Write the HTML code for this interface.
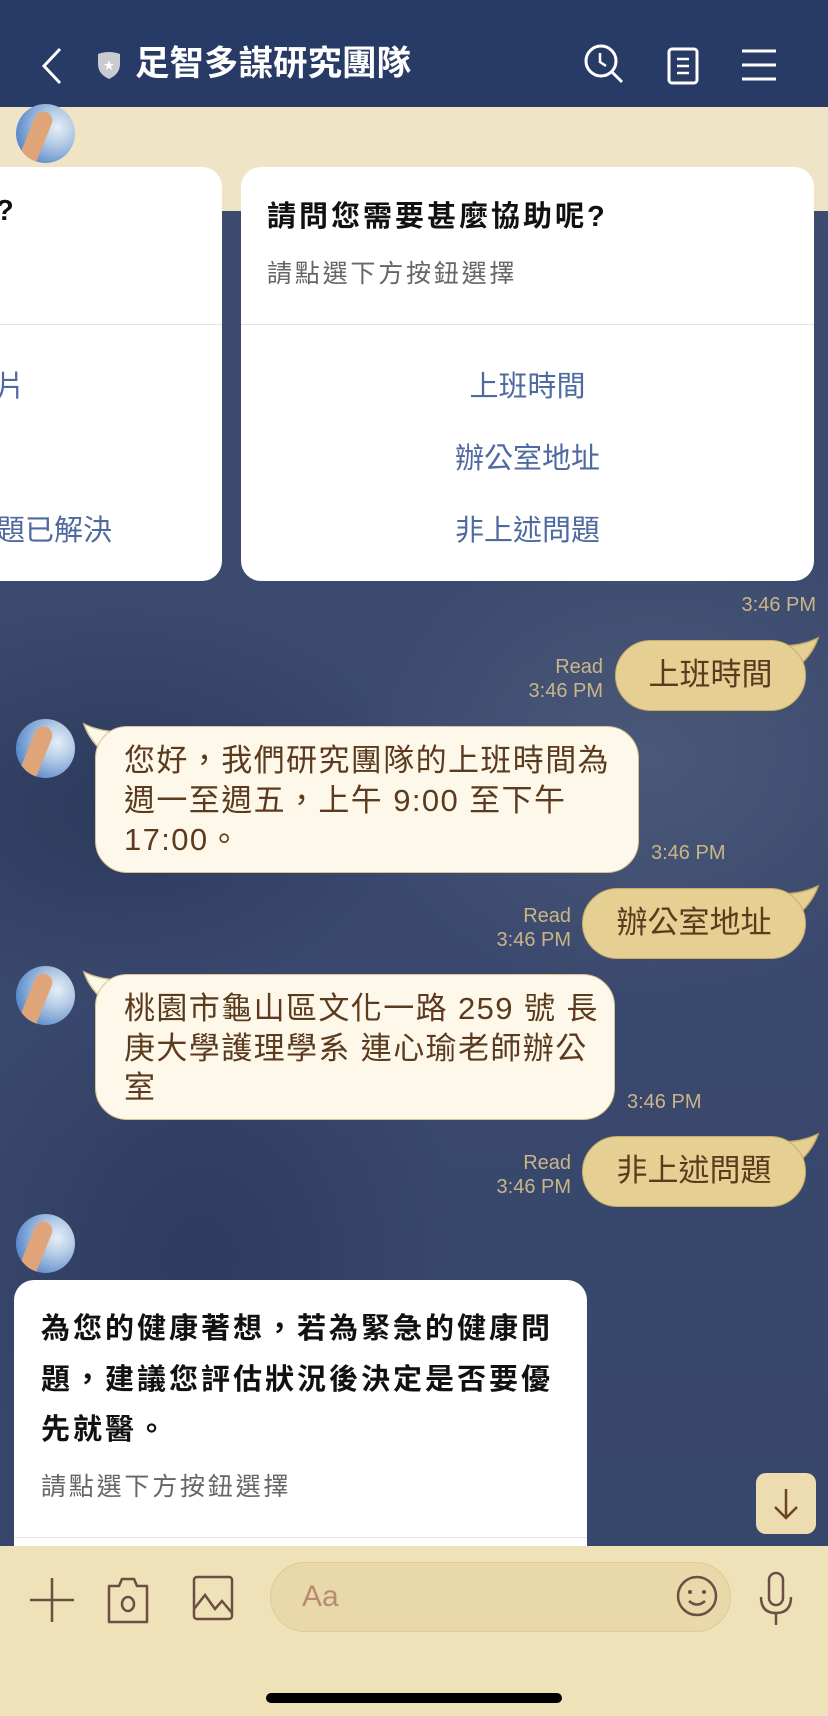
<!DOCTYPE html>
<html><head><meta charset="utf-8"><style>
*{margin:0;padding:0;box-sizing:border-box}
body{width:828px;height:1716px;overflow:hidden;position:relative;font-family:"Liberation Sans","Noto Sans CJK TC",sans-serif;background:#3c4a6f}
.bg{position:absolute;left:0;top:107px;width:828px;height:1440px;background:radial-gradient(ellipse 300px 200px at 120px 700px,#2c3a5c,transparent),radial-gradient(ellipse 260px 300px at 200px 1150px,#2e3b5e,transparent),radial-gradient(ellipse 300px 250px at 650px 650px,#4a5878,transparent),linear-gradient(#3d4b70,#37466b)}
.hdr{position:absolute;left:0;top:0;width:828px;height:107px;background:#283a66}
.band{position:absolute;left:0;top:107px;width:828px;height:104px;background:#f0e4c6}
.ab{position:absolute}
.av{position:absolute;left:16px;width:59px;height:59px;border-radius:50%;background:radial-gradient(circle at 70% 40%,#e6eef8 0,#b7cde6 30%,#5d8ccc 75%);overflow:hidden}
.av:after{content:"";position:absolute;left:10px;top:6px;width:18px;height:62px;background:#e0a479;border-radius:9px;transform:rotate(22deg)}
.card{position:absolute;background:#fff;border-radius:20px;overflow:hidden}
.t{position:absolute;white-space:nowrap}
.sent{position:absolute;background:#e5cf93;border:1.5px solid #c9ad63;border-radius:36px;color:#5c3a1e;font-size:31px;text-align:center;line-height:68px;white-space:nowrap}
.rec{position:absolute;background:#fdf8ea;border:1.5px solid #d8c490;border-radius:32px;color:#5c3a1e;font-size:31px;line-height:39.5px;padding:14px 28px;white-space:nowrap;letter-spacing:1.4px}
.tm{position:absolute;color:#c9b688;font-size:20px;text-align:right;line-height:24px;white-space:nowrap}
.btn{position:absolute;left:0;width:100%;text-align:center;color:#4f6aa0;font-size:29px}
.sub{font-size:25px;color:#666;letter-spacing:2.8px}
.ttl{font-size:29px;font-weight:bold;color:#111;letter-spacing:3px}
</style></head><body>
<div class="bg"></div>
<div class="band"></div>
<div class="hdr">
<svg class="ab" style="left:38px;top:46px" width="26" height="40"><path d="M22 3 L6 20 L22 37" stroke="#fff" stroke-width="3" fill="none"/></svg>
<svg class="ab" style="left:96px;top:50px" width="26" height="30"><path d="M2 4 Q13 0 24 4 L24 14 Q24 24 13 29 Q2 24 2 14Z" fill="#c9cbd0"/><text x="13" y="19" font-size="11" fill="#fff" text-anchor="middle">★</text></svg>
<div class="t" style="left:135px;top:44px;font-size:34.5px;font-weight:bold;color:#fff;line-height:40px">足智多謀研究團隊</div>
<svg class="ab" style="left:584px;top:44px" width="42" height="42"><circle cx="17" cy="17" r="15" stroke="#fff" stroke-width="3" fill="none"/><path d="M16 9 V18 L22 22" stroke="#fff" stroke-width="2.5" fill="none"/><path d="M28 28 L38 38" stroke="#fff" stroke-width="3"/></svg>
<svg class="ab" style="left:667px;top:47px" width="32" height="38"><rect x="2" y="2" width="28" height="34" rx="3" stroke="#fff" stroke-width="3" fill="none"/><path d="M10 12 H22 M10 19 H22 M10 26 H22" stroke="#fff" stroke-width="2.5"/></svg>
<svg class="ab" style="left:742px;top:48px" width="34" height="34"><path d="M0 3 H34 M0 17 H34 M0 31 H34" stroke="#fff" stroke-width="3"/></svg>
</div>
<div class="av" style="top:104px"></div>
<div class="card" style="left:-300px;top:167px;width:522px;height:414px">
<div class="t ttl" style="left:296px;top:28px">?</div>
<div style="position:absolute;left:0;top:157px;width:100%;border-top:1px solid #e2e2e2"></div>
<div class="t" style="left:296px;top:196px;font-size:29px;color:#4f6aa0">片</div>
<div class="t" style="left:296px;top:340px;font-size:29px;color:#4f6aa0">題已解決</div>
</div>
<div class="card" style="left:241px;top:167px;width:573px;height:414px">
<div class="t ttl" style="left:26px;top:26px">請問您需要甚麼協助呢?</div>
<div class="t sub" style="left:26px;top:87px">請點選下方按鈕選擇</div>
<div style="position:absolute;left:0;top:157px;width:100%;border-top:1px solid #e2e2e2"></div>
<div class="btn" style="top:196px">上班時間</div>
<div class="btn" style="top:268px">辦公室地址</div>
<div class="btn" style="top:340px">非上述問題</div>
</div>
<div class="tm" style="left:700px;top:593px;width:116px">3:46 PM</div>

<svg class="ab" style="left:780px;top:636px" width="40" height="36"><path d="M0 10 Q22 10 38 2 Q32 20 14 34 L0 34Z" fill="#e5cf93" stroke="#c9ad63" stroke-width="1.5"/></svg>
<div class="sent" style="left:615px;top:640px;width:191px;height:71px">上班時間</div>
<div class="tm" style="left:470px;top:655px;width:133px">Read<br>3:46 PM</div>

<div class="av" style="top:719px"></div>
<svg class="ab" style="left:82px;top:722px" width="40" height="36"><path d="M40 10 Q18 10 2 2 Q8 20 26 34 L40 34Z" fill="#fdf8ea" stroke="#d8c490" stroke-width="1.5"/></svg>
<div class="rec" style="left:95px;top:726px;width:544px;height:147px">您好，我們研究團隊的上班時間為<br>週一至週五，上午 9:00 至下午<br>17:00。</div>
<div class="tm" style="left:651px;top:841px">3:46 PM</div>

<svg class="ab" style="left:780px;top:884px" width="40" height="36"><path d="M0 10 Q22 10 38 2 Q32 20 14 34 L0 34Z" fill="#e5cf93" stroke="#c9ad63" stroke-width="1.5"/></svg>
<div class="sent" style="left:582px;top:888px;width:224px;height:71px">辦公室地址</div>
<div class="tm" style="left:430px;top:904px;width:141px">Read<br>3:46 PM</div>

<div class="av" style="top:966px"></div>
<svg class="ab" style="left:82px;top:970px" width="40" height="36"><path d="M40 10 Q18 10 2 2 Q8 20 26 34 L40 34Z" fill="#fdf8ea" stroke="#d8c490" stroke-width="1.5"/></svg>
<div class="rec" style="left:95px;top:974px;width:520px;height:146px">桃園市龜山區文化一路 259 號 長<br>庚大學護理學系 連心瑜老師辦公<br>室</div>
<div class="tm" style="left:627px;top:1090px">3:46 PM</div>

<svg class="ab" style="left:780px;top:1132px" width="40" height="36"><path d="M0 10 Q22 10 38 2 Q32 20 14 34 L0 34Z" fill="#e5cf93" stroke="#c9ad63" stroke-width="1.5"/></svg>
<div class="sent" style="left:582px;top:1136px;width:224px;height:71px">非上述問題</div>
<div class="tm" style="left:430px;top:1151px;width:141px">Read<br>3:46 PM</div>

<div class="av" style="top:1214px"></div>
<div class="card" style="left:14px;top:1280px;width:573px;height:300px">
<div class="t ttl" style="left:27px;top:24px;line-height:50.5px">為您的健康著想，若為緊急的健康問<br>題，建議您評估狀況後決定是否要優<br>先就醫。</div>
<div class="t sub" style="left:27px;top:187px">請點選下方按鈕選擇</div>
<div style="position:absolute;left:0;top:257px;width:100%;border-top:1px solid #e2e2e2"></div>
</div>
<div class="ab" style="left:756px;top:1473px;width:60px;height:61px;background:#ecdcb0;border-radius:10px"><svg width="60" height="61"><path d="M30 16 V44 M19 34 L30 45 L41 34" stroke="#6b4426" stroke-width="2.5" fill="none"/></svg></div>

<div class="ab" style="left:0;top:1546px;width:828px;height:170px;background:#efe1b8"></div>
<svg class="ab" style="left:28px;top:1576px" width="48" height="48"><path d="M24 2 V46 M2 24 H46" stroke="#6b4f42" stroke-width="2.5"/></svg>
<svg class="ab" style="left:106px;top:1574px" width="44" height="50"><path d="M3 12 H13 L16 5 H28 L31 12 H41 V48 H3Z" stroke="#6b4f42" stroke-width="2.5" fill="none" stroke-linejoin="round"/><ellipse cx="22" cy="30" rx="6" ry="7" stroke="#6b4f42" stroke-width="2.5" fill="none"/></svg>
<svg class="ab" style="left:192px;top:1575px" width="44" height="48"><rect x="2" y="2" width="38" height="42" rx="3" stroke="#6b4f42" stroke-width="2.5" fill="none"/><path d="M2 34 L13 20 L23 34 L30 26 L40 38" stroke="#6b4f42" stroke-width="2.5" fill="none"/></svg>
<div class="ab" style="left:270px;top:1562px;width:461px;height:70px;border-radius:35px;background:#e9d8a9;border:1px solid #e0cb94"></div>
<div class="t" style="left:302px;top:1580px;font-size:30px;color:#b68d72">Aa</div>
<svg class="ab" style="left:675px;top:1574px" width="44" height="44"><circle cx="22" cy="22" r="19" stroke="#6b4f42" stroke-width="2.5" fill="none"/><circle cx="15" cy="18" r="2" fill="#6b4f42"/><circle cx="29" cy="18" r="2" fill="#6b4f42"/><path d="M14 27 Q22 34 30 27" stroke="#6b4f42" stroke-width="2.5" fill="none"/></svg>
<svg class="ab" style="left:758px;top:1571px" width="36" height="54"><rect x="11" y="2" width="14" height="32" rx="7" stroke="#6b4f42" stroke-width="2.5" fill="none"/><path d="M3 26 Q3 42 18 42 Q33 42 33 26 M18 42 V54" stroke="#6b4f42" stroke-width="2.5" fill="none"/></svg>
<div class="ab" style="left:266px;top:1693px;width:296px;height:10px;border-radius:5px;background:#000"></div>
</body></html>
